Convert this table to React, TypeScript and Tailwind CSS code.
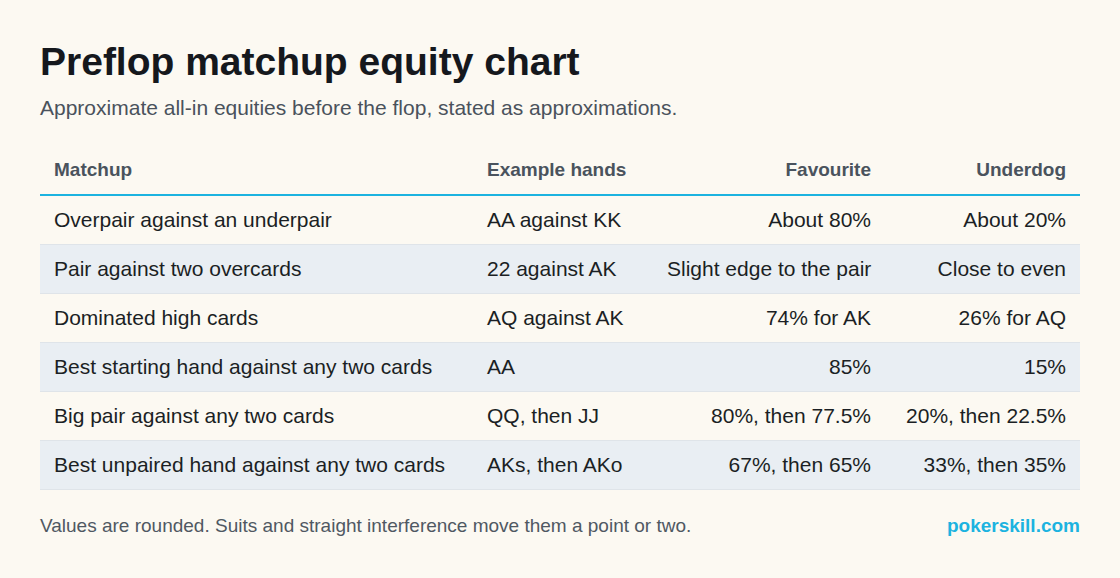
const rows = [
  ["Overpair against an underpair", "AA against KK", "About 80%", "About 20%"],
  ["Pair against two overcards", "22 against AK", "Slight edge to the pair", "Close to even"],
  ["Dominated high cards", "AQ against AK", "74% for AK", "26% for AQ"],
  ["Best starting hand against any two cards", "AA", "85%", "15%"],
  ["Big pair against any two cards", "QQ, then JJ", "80%, then 77.5%", "20%, then 22.5%"],
  ["Best unpaired hand against any two cards", "AKs, then AKo", "67%, then 65%", "33%, then 35%"],
];

export default function App() {
  return (
    <div className="w-[1120px] h-[578px] bg-[#fcf9f2] px-10 pt-[39px] font-['Liberation_Sans',Arial,sans-serif] text-[#1b1f24] overflow-hidden">
      <h1 className="text-[39px] leading-[46px] font-bold text-[#15181d]">Preflop matchup equity chart</h1>
      <p className="mt-[11px] text-[21px] leading-6 text-[#4a525c]">
        Approximate all-in equities before the flop, stated as approximations.
      </p>

      <table className="mt-[26px] w-full border-collapse table-fixed">
        <colgroup>
          <col className="w-[433px]" />
          <col className="w-[180px]" />
          <col className="w-[232px]" />
          <col className="w-[195px]" />
        </colgroup>
        <thead>
          <tr className="border-b-2 border-[#1cb3e0] text-[19px] leading-6 font-bold text-[#4a535d]">
            <th className="h-[49px] px-[14px] text-left font-bold">Matchup</th>
            <th className="px-[14px] text-left font-bold">Example hands</th>
            <th className="px-[14px] text-right font-bold">Favourite</th>
            <th className="px-[14px] text-right font-bold">Underdog</th>
          </tr>
        </thead>
        <tbody>
          {rows.map((r, i) => (
            <tr key={i} className={`border-b border-[#dfe4e9] text-[21px] leading-6 ${i % 2 === 1 ? "bg-[#e9eef3]" : ""}`}>
              <td className="h-[49px] px-[14px] whitespace-nowrap">{r[0]}</td>
              <td className="px-[14px] whitespace-nowrap">{r[1]}</td>
              <td className="px-[14px] text-right whitespace-nowrap">{r[2]}</td>
              <td className="px-[14px] text-right whitespace-nowrap">{r[3]}</td>
            </tr>
          ))}
        </tbody>
      </table>

      <div className="mt-[26px] flex items-center justify-between text-[19px] leading-5">
        <span className="text-[#4f5862]">Values are rounded. Suits and straight interference move them a point or two.</span>
        <span className="font-bold text-[#1cb3e0]">pokerskill.com</span>
      </div>
    </div>
  );
}
